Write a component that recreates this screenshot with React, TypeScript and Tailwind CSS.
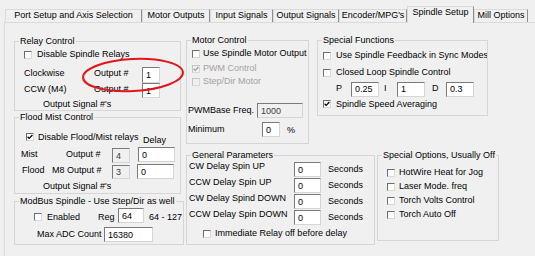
import type { ReactNode } from 'react'

function Check({ checked = false, disabled = false, className = '' }: { checked?: boolean; disabled?: boolean; className?: string }) {
  return (
    <span
      className={`flex h-[8px] w-[8px] shrink-0 items-center justify-center border border-t-[#6e6e6e] border-l-[#6e6e6e] border-r-[#d8d8d8] border-b-[#d8d8d8] ${
        disabled ? 'bg-[#f0f0f0]' : 'bg-white'
      } ${className}`}
    >
      {checked && (
        <svg width="6" height="6" viewBox="0 0 6 6">
          <path d="M0.6 2.8 2.2 4.4 5.4 1" fill="none" stroke={disabled ? '#a0a0a0' : '#000'} strokeWidth="1.3" />
        </svg>
      )}
    </span>
  )
}

// sunken edit box; className must carry width, height and margins
function Field({ value, className, disabled = false }: { value: string; className: string; disabled?: boolean }) {
  return (
    <span
      className={`flex shrink-0 items-center border border-t-[#7a7a7a] border-l-[#7a7a7a] border-r-[#d5d5d5] border-b-[#d5d5d5] pl-[3px] leading-[12px] ${
        disabled ? 'bg-[#f0f0f0] text-[#3c3c3c]' : 'bg-white'
      } ${className}`}
    >
      {value}
    </span>
  )
}

function Group({ title, className, children }: { title: string; className: string; children: ReactNode }) {
  return (
    <div className={`shrink-0 border border-[#d5d5d5] ${className}`}>
      <div className="-mt-[7px] ml-[4px] w-fit whitespace-nowrap bg-[#f0f0f0] px-[1px] leading-[12px]">{title}</div>
      {children}
    </div>
  )
}

const tabs = [
  { label: 'Port Setup and Axis Selection', w: 'w-[137px]' },
  { label: 'Motor Outputs', w: 'w-[68px]' },
  { label: 'Input Signals', w: 'w-[63px]' },
  { label: 'Output Signals', w: 'w-[66px]' },
  { label: "Encoder/MPG's", w: 'w-[68px]' },
  { label: 'Spindle Setup', w: 'w-[67px]', active: true },
  { label: 'Mill Options', w: 'w-[54px]' },
]

const delays = ['CW Delay Spin UP', 'CCW Delay Spin UP', 'CW Delay Spind DOWN', 'CCW Delay Spin DOWN']
const specials = ['HotWire Heat for Jog', 'Laser Mode. freq', 'Torch Volts Control', 'Torch Auto Off']

export default function App() {
  return (
    <div className="relative h-[256px] w-[535px] overflow-hidden bg-[#f0f0f0] font-['Liberation_Sans',Arial,sans-serif] text-[9px] text-black">
      {/* tab strip */}
      <div className="flex h-[22px] items-end pl-[5px]">
        {tabs.map(t =>
          t.active ? (
            <div
              key={t.label}
              className={`relative z-10 -mb-[1px] flex h-[17px] shrink-0 justify-center whitespace-nowrap border-t border-l border-r border-t-[#dadada] border-l-[#dadada] border-r-[#8e8e8e] bg-[#f0f0f0] leading-[10px] ${t.w}`}
            >
              {t.label}
            </div>
          ) : (
            <div
              key={t.label}
              className={`flex h-[13px] shrink-0 justify-center whitespace-nowrap border-t border-l border-r border-t-[#dadada] border-l-[#dadada] border-r-[#8e8e8e] leading-[10px] ${t.w}`}
            >
              {t.label}
            </div>
          )
        )}
      </div>

      {/* tab page */}
      <div className="ml-[4px] flex h-[234px] items-start border-t border-l border-[#dadada]">
        {/* left column */}
        <div className="ml-[9px] mt-[18px] flex w-[170px] shrink-0 flex-col items-start">
          <Group title="Relay Control" className="h-[70px] w-[167px]">
            <div className="flex h-[16px] items-center pl-[9px]">
              <Check />
              <span className="ml-[5px]">Disable Spindle Relays</span>
            </div>
            <div className="flex h-[20px] items-start pl-[9px]">
              <span className="mt-[4px] w-[70px] leading-[12px]">Clockwise</span>
              <span className="mt-[4px] w-[48px] leading-[12px]">Output #</span>
              <Field value="1" className="mt-[4px] h-[16px] w-[18px]" />
            </div>
            <div className="flex h-[15px] items-start pl-[9px]">
              <span className="w-[70px] leading-[12px]">CCW (M4)</span>
              <span className="w-[48px] leading-[12px]">Output #</span>
              <Field value="1" className="h-[15px] w-[18px]" />
            </div>
            <div className="h-[12px] pl-[28px] leading-[12px]">Output Signal #'s</div>
          </Group>

          <Group title="Flood Mist Control" className="mt-[6px] h-[77px] w-[167px]">
            <div className="flex h-[24px] items-start pl-[11px]">
              <Check checked className="mt-[10px]" />
              <span className="ml-[4px] mt-[8px] w-[105px] whitespace-nowrap leading-[12px]">Disable Flood/Mist relays</span>
              <span className="mt-[11px] leading-[12px]">Delay</span>
            </div>
            <div className="flex h-[15px] items-start pl-[6px]">
              <span className="mt-[1px] w-[45px] leading-[12px]">Mist</span>
              <span className="mt-[1px] w-[46px] leading-[12px]">Output #</span>
              <Field value="4" disabled className="mt-[1px] h-[15px] w-[18px]" />
              <Field value="0" className="ml-[8px] h-[15px] w-[37px]" />
            </div>
            <div className="flex h-[18px] items-start pl-[7px]">
              <span className="mt-[2px] w-[30px] leading-[12px]">Flood</span>
              <span className="mt-[2px] w-[60px] leading-[12px]">M8 Output #</span>
              <Field value="3" disabled className="mt-[3px] h-[14px] w-[18px]" />
              <Field value="0" className="ml-[7px] mt-[2px] h-[15px] w-[37px]" />
            </div>
            <div className="h-[13px] pl-[28px] leading-[12px]">Output Signal #'s</div>
          </Group>

          <Group title="ModBus Spindle - Use Step/Dir as well" className="mt-[7px] h-[44px] w-[170px]">
            <div className="flex h-[17px] items-start pl-[19px]">
              <Check className="mt-[6px]" />
              <span className="ml-[5px] mt-[4px] w-[51px] leading-[12px]">Enabled</span>
              <span className="mt-[4px] w-[20px] leading-[12px]">Reg</span>
              <Field value="64" className="mt-[1px] h-[15px] w-[26px]" />
              <span className="ml-[5px] mt-[4px] whitespace-nowrap leading-[12px]">64 - 127</span>
            </div>
            <div className="flex h-[20px] items-start pl-[22px]">
              <span className="mt-[4px] w-[67px] whitespace-nowrap leading-[12px]">Max ADC Count</span>
              <Field value="16380" className="mt-[3px] h-[15px] w-[49px]" />
            </div>
          </Group>
        </div>

        {/* right area */}
        <div className="ml-[2px] mt-[17px] flex flex-col">
          <div className="flex items-start">
            <Group title="Motor Control" className="h-[104px] w-[123px]">
              <div className="flex h-[16px] items-center overflow-hidden whitespace-nowrap pl-[5px]">
                <Check />
                <span className="ml-[3px]">Use Spindle Motor Output</span>
              </div>
              <div className="flex h-[13px] items-center pl-[5px] text-[#a3a3a3]">
                <Check checked disabled className="border-t-[#c4c4c4] border-l-[#c4c4c4]" />
                <span className="ml-[3px]">PWM Control</span>
              </div>
              <div className="flex h-[13px] items-center pl-[5px] text-[#a3a3a3]">
                <Check disabled className="border-t-[#c4c4c4] border-l-[#c4c4c4]" />
                <span className="ml-[3px]">Step/Dir Motor</span>
              </div>
              <div className="mt-[14px] flex h-[17px] items-center pl-[1px]">
                <span className="w-[69px] whitespace-nowrap">PWMBase Freq.</span>
                <Field value="1000" disabled className="h-[15px] w-[46px]" />
              </div>
              <div className="flex h-[24px] items-start pl-[1px]">
                <span className="mt-[4px] w-[74px] leading-[12px]">Minimum</span>
                <Field value="0" className="mt-[3px] h-[15px] w-[18px]" />
                <span className="ml-[7px] mt-[5px] leading-[12px]">%</span>
              </div>
            </Group>

            <Group title="Special Functions" className="ml-[8px] h-[76px] w-[171px]">
              <div className="flex h-[20px] items-center overflow-hidden whitespace-nowrap pl-[5px]">
                <Check />
                <span className="ml-[5px]">Use Spindle Feedback in Sync Modes</span>
              </div>
              <div className="flex h-[14px] items-center pl-[5px]">
                <Check />
                <span className="ml-[5px]">Closed Loop Spindle Control</span>
              </div>
              <div className="flex h-[18px] items-center pl-[18px]">
                <span className="w-[15px]">P</span>
                <Field value="0.25" className="h-[15px] w-[28px]" />
                <span className="w-[18px] pl-[5px]">I</span>
                <Field value="1" className="h-[15px] w-[28px]" />
                <span className="w-[21px] pl-[7px]">D</span>
                <Field value="0.3" className="h-[15px] w-[28px]" />
              </div>
              <div className="flex h-[17px] items-start pl-[5px]">
                <Check checked className="mt-[2px]" />
                <span className="ml-[5px] leading-[12px]">Spindle Speed Averaging</span>
              </div>
            </Group>
          </div>

          <div className="mt-[11px] flex items-start">
            <Group title="General Parameters" className="h-[90px] w-[189px]">
              {delays.map(d => (
                <div key={d} className="flex h-[16px] items-start pl-[2px]">
                  <span className="w-[105px] whitespace-nowrap leading-[10px]">{d}</span>
                  <Field value="0" className="mt-[1px] h-[15px] w-[27px]" />
                  <span className="ml-[7px] mt-[3px] leading-[10px]">Seconds</span>
                </div>
              ))}
              <div className="flex h-[19px] items-start pl-[16px]">
                <Check className="mt-[5px]" />
                <span className="ml-[4px] mt-[2px] whitespace-nowrap leading-[12px]">Immediate Relay off before delay</span>
              </div>
            </Group>

            <Group title="Special Options, Usually Off" className="ml-[2px] h-[86px] w-[122px]">
              <div className="pt-[5px]">
                {specials.map(s => (
                  <div key={s} className="flex h-[14px] items-center whitespace-nowrap pl-[9px]">
                    <Check />
                    <span className="ml-[4px]">{s}</span>
                  </div>
                ))}
              </div>
            </Group>
          </div>
        </div>
      </div>

      {/* red marker drawn over the screenshot */}
      <svg className="absolute left-[80px] top-[56px]" width="106" height="40" viewBox="0 0 106 40">
        <ellipse cx="53" cy="19" rx="50" ry="16" transform="rotate(-3 53 19)" fill="none" stroke="#e2141c" strokeWidth="2" />
      </svg>
    </div>
  )
}
